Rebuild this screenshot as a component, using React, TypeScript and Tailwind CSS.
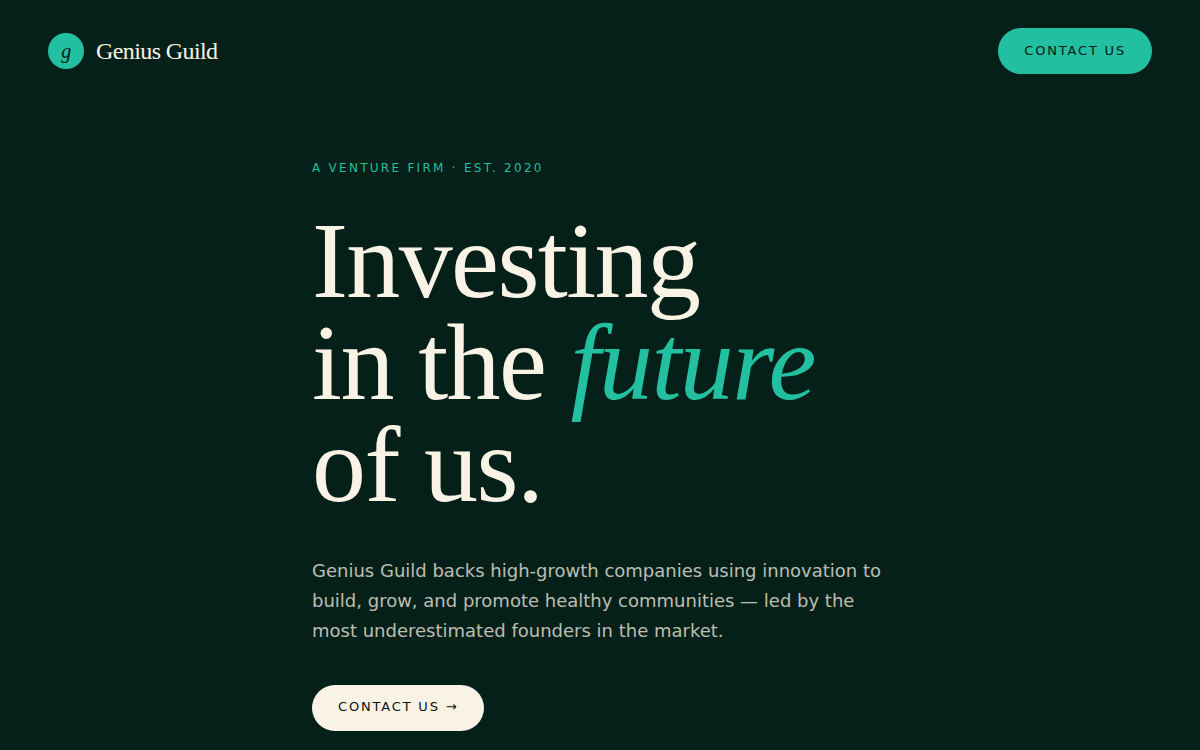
export default function App() {
  return (
    <div className="min-h-screen overflow-hidden bg-[#052018] font-['DejaVu_Sans',sans-serif] text-[#f9f3e5]">
      <header className="flex items-center justify-between px-12 py-7">
        <a
          href="#home"
          className="flex items-center gap-3 font-['Liberation_Serif',serif] text-2xl tracking-tight"
        >
          <span className="flex size-9 items-center justify-center rounded-full bg-[#22bfa0] text-xl italic leading-none text-[#0a1512]">
            g
          </span>
          Genius Guild
        </a>
        <button
          type="button"
          className="cursor-pointer rounded-full bg-[#22bfa0] px-[26px] py-[14px] text-[13px] leading-[18px] uppercase tracking-[0.14em] text-[#0a1512]"
        >
          Contact us
        </button>
      </header>

      <main id="home" className="mx-auto w-full max-w-[1200px] px-12 pt-14 lg:pl-[312px]">
        <p className="text-xs leading-5 uppercase tracking-[0.19em] text-[#22bfa0]">
          A venture firm · Est. 2020
        </p>
        <h1 className="mt-8 font-['Liberation_Serif',serif] text-6xl tracking-[-0.015em] md:text-[108px] md:leading-[102px]">
          Investing
          <br />
          in the <em className="text-[#22bfa0]">future</em>
          <br />
          of us.
        </h1>
        <p className="mt-10 max-w-[580px] text-lg leading-[30px] text-[#f9f3e5]/75">
          Genius Guild backs high-growth companies using innovation to build,
          grow, and promote healthy communities — led by the most
          underestimated founders in the market.
        </p>
        <button
          type="button"
          className="mt-[39px] mb-5 cursor-pointer rounded-full bg-[#f9f3e5] px-[26px] pt-[13px] pb-[15px] text-[13px] leading-[18px] uppercase tracking-[0.14em] text-[#0a1512]"
        >
          Contact us →
        </button>
      </main>
    </div>
  );
}
